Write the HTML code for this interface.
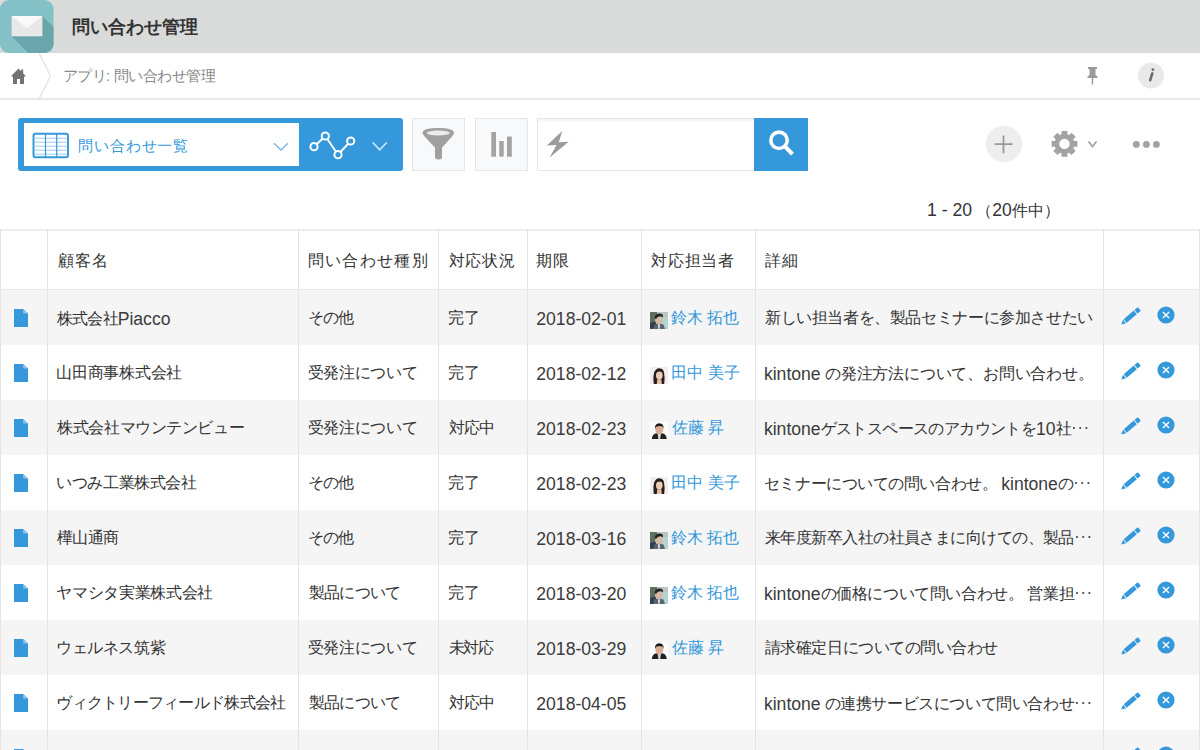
<!DOCTYPE html>
<html lang="ja">
<head>
<meta charset="utf-8">
<style>
*{box-sizing:border-box}
html,body{margin:0;padding:0}
body{width:1200px;height:750px;overflow:hidden;position:relative;background:#fff;font-family:"Liberation Sans",sans-serif;color:#333}
.abs{position:absolute}
svg{display:block}
svg.ell{display:inline-block;vertical-align:4px;margin-left:1px}
.l{font-size:17.6px;letter-spacing:0}
.td .l{position:relative;top:1px;color:#3b3b3b}
.nm .l{color:inherit}
#hdr{left:0;top:0;width:1200px;height:53px;background:#d9dada}
#title{left:72px;top:16px;font-size:18px;font-weight:bold;color:#333;line-height:22px;white-space:nowrap}
#bc{left:0;top:53px;width:1200px;height:47px;background:#fff;border-bottom:2px solid #e8eaea}
#bctext{left:62.5px;top:66.5px;font-size:15px;letter-spacing:-0.5px;color:#888;line-height:18px;white-space:nowrap}
#bctext .l{font-size:15px}
#viewbox{left:18px;top:118px;width:385px;height:53px;background:#3498db;border-radius:3px}
#viewsel{left:23.5px;top:123px;width:275.5px;height:43px;background:#fff}
#viewname{left:78px;top:136.5px;font-size:15px;letter-spacing:0.9px;color:#3498db;line-height:18px;white-space:nowrap}
.tbtn{top:118px;width:53px;height:53px;background:#f7f9fa;border:1px solid #e3e7e8}
#search{left:537px;top:118px;width:218px;height:53px;background:#fff;border:1px solid #e6e8e8;box-shadow:inset 0 2px 3px rgba(0,0,0,.05)}
#sbtn{left:754px;top:118px;width:54px;height:53px;background:#3498db}
#count{left:927px;top:200px;font-size:15.5px;color:#333;line-height:20px;white-space:nowrap}
.hl{left:0;width:1200px;height:1px;background:#e6e6e6}
.vl{width:1px;height:530px;background:#e4e4e4}
.th{font-size:16px;letter-spacing:1.2px;line-height:20px;white-space:nowrap;color:#333}
.td{font-size:16px;letter-spacing:-0.4px;line-height:20px;white-space:nowrap;color:#333}
.nm{color:#3498db}
</style>
</head>
<body>
<div id="hdr" class="abs"></div>
<svg class="abs" style="left:0;top:0" width="56" height="54" viewBox="0 0 56 54">
  <defs><clipPath id="ic"><rect x="0" y="0" width="53.5" height="53" rx="9"/></clipPath></defs>
  <rect x="0" y="0" width="53.5" height="53" rx="9" fill="#83c1c7"/>
  <path clip-path="url(#ic)" d="M11.6 36.3L42.4 16L82.4 56L51.6 76.3Z" fill="#6ba6ac"/>
  <rect x="11.6" y="16" width="30.8" height="20.3" fill="#e9e8e8"/>
  <path d="M11.6 16L27 28.3L42.4 16Z" fill="#f9f9f9"/>
</svg>
<div id="title" class="abs">問い合わせ管理</div>
<div id="bc" class="abs"></div>
<svg class="abs" style="left:0;top:53px" width="60" height="46" viewBox="0 53 60 46">
  <path d="M39 53L50.5 76L39 99" fill="none" stroke="#e2e2e2" stroke-width="1.2"/>
  <path d="M18.5 68.5L10.8 76.5H13V84H17V79H20V84H24V76.5H26.2L23.2 73.4V69.5H21.2V71.3Z" fill="#737373"/>
</svg>
<div id="bctext" class="abs">アプリ<span class="l">:</span> 問い合わせ管理</div>
<svg class="abs" style="left:1080px;top:60px" width="90" height="32" viewBox="1080 60 90 32">
  <path d="M1088 67H1097V69H1095.5V75L1097.5 76.5V78H1093.2V84.5H1091.8V78H1087.5V76.5L1089.5 75V69H1088Z" fill="#9a9a9a"/>
  <circle cx="1151" cy="75.5" r="13" fill="#e8eaea"/>
  <path d="M1152.3 73.4L1150.2 80.2" stroke="#6b6b6b" stroke-width="2.6" stroke-linecap="round"/>
  <circle cx="1152.9" cy="69.6" r="1.4" fill="#6b6b6b"/>
</svg>

<div id="viewbox" class="abs"></div>
<div id="viewsel" class="abs"></div>
<svg class="abs" style="left:0;top:110px" width="410" height="70" viewBox="0 110 410 70">
  <rect x="33.5" y="133.7" width="34.5" height="23.5" rx="2" fill="#fff" stroke="#3498db" stroke-width="2"/>
  <path d="M34 138.2H67.5M34 142.2H67.5M34 146.2H67.5M34 150.2H67.5M34 154.2H67.5" stroke="#9ccaee" stroke-width="1"/>
  <path d="M45.5 134V157M56.7 134V157" stroke="#3498db" stroke-width="1.2"/>
  <path d="M274 143.2L281 150L288 143.2" fill="none" stroke="#7db5e3" stroke-width="1.5"/>
  <path d="M314 146.7L325.3 136L338 154.7L350.7 141" fill="none" stroke="#fff" stroke-width="2"/>
  <circle cx="314" cy="146.7" r="3.6" fill="#3498db" stroke="#fff" stroke-width="2"/>
  <circle cx="325.3" cy="136" r="3.6" fill="#3498db" stroke="#fff" stroke-width="2"/>
  <circle cx="338" cy="154.7" r="3.6" fill="#3498db" stroke="#fff" stroke-width="2"/>
  <circle cx="350.7" cy="141" r="3.6" fill="#3498db" stroke="#fff" stroke-width="2"/>
  <path d="M372.7 142.5L379.7 149.8L386.7 142.5" fill="none" stroke="#d6e9f8" stroke-width="1.5"/>
</svg>
<div id="viewname" class="abs">問い合わせ一覧</div>
<div class="abs tbtn" style="left:412px"></div>
<div class="abs tbtn" style="left:475px"></div>
<div id="search" class="abs"></div>
<div id="sbtn" class="abs"></div>
<svg class="abs" style="left:410px;top:110px" width="400" height="70" viewBox="410 110 400 70">
  <path d="M422.5 133Q422.5 128 438.3 128Q454 128 454 133Q454 135 442 147.5V157Q442 159.5 438.5 159.5Q435 159.5 435 157V147.5Q422.5 135 422.5 133Z" fill="#a0a0a0"/>
  <ellipse cx="438.3" cy="133" rx="11.5" ry="2.6" fill="#ececec"/>
  <rect x="491.3" y="132" width="4.7" height="24.7" fill="#a3a3a3"/>
  <rect x="499.3" y="141" width="4.4" height="15.7" fill="#a3a3a3"/>
  <rect x="507" y="136.6" width="4.8" height="20.1" fill="#a3a3a3"/>
  <path d="M562.2 131L546.8 145.5L556.5 145L549.6 157.6L568.7 141.7L558.8 142.3Z" fill="#9c9c9c"/>
  <circle cx="779" cy="140.3" r="8.2" fill="none" stroke="#fff" stroke-width="3.6"/>
  <path d="M785.5 147L792.5 154.2" stroke="#fff" stroke-width="4"/>
</svg>
<svg class="abs" style="left:960px;top:110px" width="240" height="70" viewBox="960 110 240 70">
  <circle cx="1004" cy="144" r="18.3" fill="#eeeeee"/>
  <path d="M994.5 144.2H1012.5M1003.5 135.5V153.2" stroke="#999" stroke-width="1.8"/>
  <path id="gear" fill="#a3a3a3" fill-rule="evenodd" d="M1061.54 134.35L1061.62 131.02L1067.38 131.02L1067.46 134.35L1069.17 135.06L1071.57 132.75L1075.65 136.83L1073.34 139.23L1074.05 140.94L1077.38 141.02L1077.38 146.78L1074.05 146.86L1073.34 148.57L1075.65 150.97L1071.57 155.05L1069.17 152.74L1067.46 153.45L1067.38 156.78L1061.62 156.78L1061.54 153.45L1059.83 152.74L1057.43 155.05L1053.35 150.97L1055.66 148.57L1054.95 146.86L1051.62 146.78L1051.62 141.02L1054.95 140.94L1055.66 139.23L1053.35 136.83L1057.43 132.75L1059.83 135.06ZM1069.7 143.9A5.2 5.2 0 1 0 1059.3 143.9A5.2 5.2 0 1 0 1069.7 143.9Z"/>
  <path d="M1088.5 141.5L1092.5 146.5L1096.5 141.5" fill="none" stroke="#a3a3a3" stroke-width="1.8"/>
  <circle cx="1136.3" cy="144.4" r="3.4" fill="#a3a3a3"/>
  <circle cx="1146.4" cy="144.4" r="3.4" fill="#a3a3a3"/>
  <circle cx="1156.4" cy="144.4" r="3.4" fill="#a3a3a3"/>
</svg>
<div id="count" class="abs"><span class="l">1 - 20</span> （<span class="l">20</span>件中）</div>
<div class="abs" style="left:0;top:290px;width:1200px;height:55px;background:#f5f5f5"></div>
<div class="abs" style="left:0;top:345px;width:1200px;height:55px;background:#fff"></div>
<div class="abs" style="left:0;top:400px;width:1200px;height:55px;background:#f5f5f5"></div>
<div class="abs" style="left:0;top:455px;width:1200px;height:55px;background:#fff"></div>
<div class="abs" style="left:0;top:510px;width:1200px;height:55px;background:#f5f5f5"></div>
<div class="abs" style="left:0;top:565px;width:1200px;height:55px;background:#fff"></div>
<div class="abs" style="left:0;top:620px;width:1200px;height:55px;background:#f5f5f5"></div>
<div class="abs" style="left:0;top:675px;width:1200px;height:55px;background:#fff"></div>
<div class="abs" style="left:0;top:730px;width:1200px;height:55px;background:#f5f5f5"></div>
<div class="abs hl" style="top:229px;height:2px;background:#ececec"></div>
<div class="abs hl" style="top:289px"></div>
<div class="abs vl" style="left:0px;top:229px"></div>
<div class="abs vl" style="left:47px;top:229px"></div>
<div class="abs vl" style="left:298px;top:229px"></div>
<div class="abs vl" style="left:438px;top:229px"></div>
<div class="abs vl" style="left:527px;top:229px"></div>
<div class="abs vl" style="left:641px;top:229px"></div>
<div class="abs vl" style="left:755px;top:229px"></div>
<div class="abs vl" style="left:1103px;top:229px"></div>
<div class="abs vl" style="left:1199px;top:229px"></div>
<div id="h1" class="abs th" style="left:57.50px;top:251px;letter-spacing:1.200px">顧客名</div>
<div id="h2" class="abs th" style="left:307.50px;top:251px;letter-spacing:1.367px">問い合わせ種別</div>
<div id="h3" class="abs th" style="left:448.50px;top:251px;letter-spacing:0.867px">対応状況</div>
<div id="h4" class="abs th" style="left:536.10px;top:251px;letter-spacing:1.100px">期限</div>
<div id="h5" class="abs th" style="left:650.90px;top:251px;letter-spacing:0.825px">対応担当者</div>
<div id="h6" class="abs th" style="left:765.00px;top:251px;letter-spacing:0.500px">詳細</div>
<div class="abs" style="left:14px;top:309px;width:14px;height:18px"><svg class="doc" width="14" height="18" viewBox="0 0 14 18"><path d="M0 0H9.2L14 4.6V18H0Z" fill="#3498db"/><path d="M9.2 0V4.6H14Z" fill="#8cc4ef"/></svg></div>
<div id="c0_1" class="abs td" style="left:57.25px;top:308px;letter-spacing:-0.902px">株式会社<span class="l">Piacco</span></div>
<div id="c0_2" class="abs td" style="left:307.80px;top:308px;letter-spacing:-0.800px">その他</div>
<div id="c0_3" class="abs td" style="left:447.80px;top:308px;letter-spacing:0.000px">完了</div>
<div id="c0_4" class="abs td" style="left:536.30px;top:308px;letter-spacing:-0.280px"><span class="l">2018-02-01</span></div>
<div class="abs" style="left:650px;top:312px;width:18px;height:17px"><svg class="av" width="18" height="17" viewBox="0 0 18 17"><rect width="18" height="17" fill="#b9c6c2"/><rect width="7" height="17" fill="#5f6f5d"/><rect x="12" y="5" width="6" height="12" fill="#b5d3d2"/><path d="M0 11L6 9V17H0Z" fill="#34404e"/><ellipse cx="8.8" cy="8" rx="3.8" ry="4.5" fill="#d5bba6"/><path d="M4.6 6Q5 1.8 9.5 1.6Q13.5 1.6 13 5.5L11.5 4.5Q8 3.5 6 7Z" fill="#262427"/><path d="M3 17L4.5 12.5Q9 10.8 13.5 12.5L15 17Z" fill="#5a6572"/><path d="M8 12.3L10 12.3L9.6 17L8.4 17Z" fill="#e9e9e9"/></svg></div>
<div id="c0_5" class="abs td nm" style="left:671.00px;top:308px;letter-spacing:-0.200px">鈴木 拓也</div>
<div id="c0_6" class="abs td" style="left:764.90px;top:308px;letter-spacing:-0.385px">新しい担当者を、製品セミナーに参加させたい</div>
<div class="abs" style="left:1119px;top:306px;width:22px;height:20px"><svg class="pen" width="22" height="20" viewBox="0 0 22 20"><path d="M2.20 18.40L7.07 17.34L4.03 13.76ZM7.76 16.75L17.81 8.19L14.76 4.62L4.71 13.17ZM18.49 7.61L21.39 5.14L21.47 4.16L19.33 1.64L18.34 1.56L15.45 4.03Z" fill="#3498db"/></svg></div>
<div class="abs" style="left:1157px;top:306px;width:18px;height:18px"><svg class="xc" width="18" height="18" viewBox="0 0 18 18"><circle cx="9" cy="9" r="8.6" fill="#3498db"/><path d="M5.9 5.9L12.1 12.1M12.1 5.9L5.9 12.1" stroke="#fff" stroke-width="1.4"/></svg></div>
<div class="abs" style="left:14px;top:364px;width:14px;height:18px"><svg class="doc" width="14" height="18" viewBox="0 0 14 18"><path d="M0 0H9.2L14 4.6V18H0Z" fill="#3498db"/><path d="M9.2 0V4.6H14Z" fill="#8cc4ef"/></svg></div>
<div id="c1_1" class="abs td" style="left:56.25px;top:363px;letter-spacing:-0.291px">山田商事株式会社</div>
<div id="c1_2" class="abs td" style="left:307.80px;top:363px;letter-spacing:-0.335px">受発注について</div>
<div id="c1_3" class="abs td" style="left:447.80px;top:363px;letter-spacing:0.000px">完了</div>
<div id="c1_4" class="abs td" style="left:536.30px;top:363px;letter-spacing:-0.280px"><span class="l">2018-02-12</span></div>
<div class="abs" style="left:650px;top:367px;width:18px;height:17px"><svg class="av" width="18" height="17" viewBox="0 0 18 17"><rect width="18" height="17" fill="#efefef"/><path d="M3.8 17Q2.8 9 4.5 4.6Q6.5 1 9.5 1.2Q13.5 1.5 14 5.5Q15.2 11 14.2 17Z" fill="#2b1d1c"/><ellipse cx="9.3" cy="8.3" rx="3.3" ry="4.3" fill="#ebcdb5"/><path d="M6 6.5Q7.5 3.5 12.6 5.2L12.4 3.8Q9 2 6 5Z" fill="#2b1d1c"/><path d="M7.3 12.2H11.3L11.8 17H6.8Z" fill="#e2c0a6"/></svg></div>
<div id="c1_5" class="abs td nm" style="left:671.00px;top:363px;letter-spacing:0.050px">田中 美子</div>
<div id="c1_6" class="abs td" style="left:763.90px;top:363px;letter-spacing:-0.184px"><span class="l">kintone</span> の発注方法について、お問い合わせ。</div>
<div class="abs" style="left:1119px;top:361px;width:22px;height:20px"><svg class="pen" width="22" height="20" viewBox="0 0 22 20"><path d="M2.20 18.40L7.07 17.34L4.03 13.76ZM7.76 16.75L17.81 8.19L14.76 4.62L4.71 13.17ZM18.49 7.61L21.39 5.14L21.47 4.16L19.33 1.64L18.34 1.56L15.45 4.03Z" fill="#3498db"/></svg></div>
<div class="abs" style="left:1157px;top:361px;width:18px;height:18px"><svg class="xc" width="18" height="18" viewBox="0 0 18 18"><circle cx="9" cy="9" r="8.6" fill="#3498db"/><path d="M5.9 5.9L12.1 12.1M12.1 5.9L5.9 12.1" stroke="#fff" stroke-width="1.4"/></svg></div>
<div class="abs" style="left:14px;top:419px;width:14px;height:18px"><svg class="doc" width="14" height="18" viewBox="0 0 14 18"><path d="M0 0H9.2L14 4.6V18H0Z" fill="#3498db"/><path d="M9.2 0V4.6H14Z" fill="#8cc4ef"/></svg></div>
<div id="c2_1" class="abs td" style="left:57.25px;top:418px;letter-spacing:-0.421px">株式会社マウンテンビュー</div>
<div id="c2_2" class="abs td" style="left:307.80px;top:418px;letter-spacing:-0.335px">受発注について</div>
<div id="c2_3" class="abs td" style="left:448.80px;top:418px;letter-spacing:-0.700px">対応中</div>
<div id="c2_4" class="abs td" style="left:536.30px;top:418px;letter-spacing:-0.280px"><span class="l">2018-02-23</span></div>
<div class="abs" style="left:650px;top:422px;width:18px;height:17px"><svg class="av" width="18" height="17" viewBox="0 0 18 17"><rect width="18" height="17" fill="#fbfbfb"/><ellipse cx="9.3" cy="7.4" rx="4" ry="4.8" fill="#d9ad92"/><path d="M5 6.8Q4.6 1.4 9.3 1.3Q14 1.4 13.6 6.8L12.6 4.6Q9.3 3.2 6.2 4.8Z" fill="#1c1616"/><path d="M1.8 17Q2.2 12 6.6 11.3L9.3 13.2L12 11.3Q16.4 12 16.8 17Z" fill="#1d2320"/><path d="M7.6 11.6L9.3 13.2L11 11.6L10.2 17H8.4Z" fill="#ecd0d5"/></svg></div>
<div id="c2_5" class="abs td nm" style="left:672.00px;top:418px;letter-spacing:-0.067px">佐藤 昇</div>
<div id="c2_6" class="abs td" style="left:763.90px;top:418px;letter-spacing:-0.612px"><span class="l">kintone</span>ゲストスペースのアカウントを<span class="l">10</span>社<svg class="ell" width="16" height="4" viewBox="0 0 16 4"><circle cx="2" cy="2" r="1.1" fill="#444"/><circle cx="8.2" cy="2" r="1.1" fill="#444"/><circle cx="14.4" cy="2" r="1.1" fill="#444"/></svg></div>
<div class="abs" style="left:1119px;top:416px;width:22px;height:20px"><svg class="pen" width="22" height="20" viewBox="0 0 22 20"><path d="M2.20 18.40L7.07 17.34L4.03 13.76ZM7.76 16.75L17.81 8.19L14.76 4.62L4.71 13.17ZM18.49 7.61L21.39 5.14L21.47 4.16L19.33 1.64L18.34 1.56L15.45 4.03Z" fill="#3498db"/></svg></div>
<div class="abs" style="left:1157px;top:416px;width:18px;height:18px"><svg class="xc" width="18" height="18" viewBox="0 0 18 18"><circle cx="9" cy="9" r="8.6" fill="#3498db"/><path d="M5.9 5.9L12.1 12.1M12.1 5.9L5.9 12.1" stroke="#fff" stroke-width="1.4"/></svg></div>
<div class="abs" style="left:14px;top:474px;width:14px;height:18px"><svg class="doc" width="14" height="18" viewBox="0 0 14 18"><path d="M0 0H9.2L14 4.6V18H0Z" fill="#3498db"/><path d="M9.2 0V4.6H14Z" fill="#8cc4ef"/></svg></div>
<div id="c3_1" class="abs td" style="left:56.25px;top:473px;letter-spacing:-0.417px">いつみ工業株式会社</div>
<div id="c3_2" class="abs td" style="left:307.80px;top:473px;letter-spacing:-0.800px">その他</div>
<div id="c3_3" class="abs td" style="left:447.80px;top:473px;letter-spacing:0.000px">完了</div>
<div id="c3_4" class="abs td" style="left:536.30px;top:473px;letter-spacing:-0.280px"><span class="l">2018-02-23</span></div>
<div class="abs" style="left:650px;top:477px;width:18px;height:17px"><svg class="av" width="18" height="17" viewBox="0 0 18 17"><rect width="18" height="17" fill="#efefef"/><path d="M3.8 17Q2.8 9 4.5 4.6Q6.5 1 9.5 1.2Q13.5 1.5 14 5.5Q15.2 11 14.2 17Z" fill="#2b1d1c"/><ellipse cx="9.3" cy="8.3" rx="3.3" ry="4.3" fill="#ebcdb5"/><path d="M6 6.5Q7.5 3.5 12.6 5.2L12.4 3.8Q9 2 6 5Z" fill="#2b1d1c"/><path d="M7.3 12.2H11.3L11.8 17H6.8Z" fill="#e2c0a6"/></svg></div>
<div id="c3_5" class="abs td nm" style="left:671.00px;top:473px;letter-spacing:0.050px">田中 美子</div>
<div id="c3_6" class="abs td" style="left:763.90px;top:473px;letter-spacing:-0.448px">セミナーについての問い合わせ。 <span class="l">kintone</span>の<svg class="ell" width="16" height="4" viewBox="0 0 16 4"><circle cx="2" cy="2" r="1.1" fill="#444"/><circle cx="8.2" cy="2" r="1.1" fill="#444"/><circle cx="14.4" cy="2" r="1.1" fill="#444"/></svg></div>
<div class="abs" style="left:1119px;top:471px;width:22px;height:20px"><svg class="pen" width="22" height="20" viewBox="0 0 22 20"><path d="M2.20 18.40L7.07 17.34L4.03 13.76ZM7.76 16.75L17.81 8.19L14.76 4.62L4.71 13.17ZM18.49 7.61L21.39 5.14L21.47 4.16L19.33 1.64L18.34 1.56L15.45 4.03Z" fill="#3498db"/></svg></div>
<div class="abs" style="left:1157px;top:471px;width:18px;height:18px"><svg class="xc" width="18" height="18" viewBox="0 0 18 18"><circle cx="9" cy="9" r="8.6" fill="#3498db"/><path d="M5.9 5.9L12.1 12.1M12.1 5.9L5.9 12.1" stroke="#fff" stroke-width="1.4"/></svg></div>
<div class="abs" style="left:14px;top:529px;width:14px;height:18px"><svg class="doc" width="14" height="18" viewBox="0 0 14 18"><path d="M0 0H9.2L14 4.6V18H0Z" fill="#3498db"/><path d="M9.2 0V4.6H14Z" fill="#8cc4ef"/></svg></div>
<div id="c4_1" class="abs td" style="left:57.25px;top:528px;letter-spacing:-0.850px">樺山通商</div>
<div id="c4_2" class="abs td" style="left:307.80px;top:528px;letter-spacing:-0.800px">その他</div>
<div id="c4_3" class="abs td" style="left:447.80px;top:528px;letter-spacing:0.000px">完了</div>
<div id="c4_4" class="abs td" style="left:536.30px;top:528px;letter-spacing:-0.280px"><span class="l">2018-03-16</span></div>
<div class="abs" style="left:650px;top:532px;width:18px;height:17px"><svg class="av" width="18" height="17" viewBox="0 0 18 17"><rect width="18" height="17" fill="#b9c6c2"/><rect width="7" height="17" fill="#5f6f5d"/><rect x="12" y="5" width="6" height="12" fill="#b5d3d2"/><path d="M0 11L6 9V17H0Z" fill="#34404e"/><ellipse cx="8.8" cy="8" rx="3.8" ry="4.5" fill="#d5bba6"/><path d="M4.6 6Q5 1.8 9.5 1.6Q13.5 1.6 13 5.5L11.5 4.5Q8 3.5 6 7Z" fill="#262427"/><path d="M3 17L4.5 12.5Q9 10.8 13.5 12.5L15 17Z" fill="#5a6572"/><path d="M8 12.3L10 12.3L9.6 17L8.4 17Z" fill="#e9e9e9"/></svg></div>
<div id="c4_5" class="abs td nm" style="left:671.00px;top:528px;letter-spacing:-0.200px">鈴木 拓也</div>
<div id="c4_6" class="abs td" style="left:764.90px;top:528px;letter-spacing:-0.548px">来年度新卒入社の社員さまに向けての、製品<svg class="ell" width="16" height="4" viewBox="0 0 16 4"><circle cx="2" cy="2" r="1.1" fill="#444"/><circle cx="8.2" cy="2" r="1.1" fill="#444"/><circle cx="14.4" cy="2" r="1.1" fill="#444"/></svg></div>
<div class="abs" style="left:1119px;top:526px;width:22px;height:20px"><svg class="pen" width="22" height="20" viewBox="0 0 22 20"><path d="M2.20 18.40L7.07 17.34L4.03 13.76ZM7.76 16.75L17.81 8.19L14.76 4.62L4.71 13.17ZM18.49 7.61L21.39 5.14L21.47 4.16L19.33 1.64L18.34 1.56L15.45 4.03Z" fill="#3498db"/></svg></div>
<div class="abs" style="left:1157px;top:526px;width:18px;height:18px"><svg class="xc" width="18" height="18" viewBox="0 0 18 18"><circle cx="9" cy="9" r="8.6" fill="#3498db"/><path d="M5.9 5.9L12.1 12.1M12.1 5.9L5.9 12.1" stroke="#fff" stroke-width="1.4"/></svg></div>
<div class="abs" style="left:14px;top:584px;width:14px;height:18px"><svg class="doc" width="14" height="18" viewBox="0 0 14 18"><path d="M0 0H9.2L14 4.6V18H0Z" fill="#3498db"/><path d="M9.2 0V4.6H14Z" fill="#8cc4ef"/></svg></div>
<div id="c5_1" class="abs td" style="left:56.25px;top:583px;letter-spacing:-0.306px">ヤマシタ実業株式会社</div>
<div id="c5_2" class="abs td" style="left:308.80px;top:583px;letter-spacing:-0.720px">製品について</div>
<div id="c5_3" class="abs td" style="left:447.80px;top:583px;letter-spacing:0.000px">完了</div>
<div id="c5_4" class="abs td" style="left:536.30px;top:583px;letter-spacing:-0.613px"><span class="l">2018-03-20</span></div>
<div class="abs" style="left:650px;top:587px;width:18px;height:17px"><svg class="av" width="18" height="17" viewBox="0 0 18 17"><rect width="18" height="17" fill="#b9c6c2"/><rect width="7" height="17" fill="#5f6f5d"/><rect x="12" y="5" width="6" height="12" fill="#b5d3d2"/><path d="M0 11L6 9V17H0Z" fill="#34404e"/><ellipse cx="8.8" cy="8" rx="3.8" ry="4.5" fill="#d5bba6"/><path d="M4.6 6Q5 1.8 9.5 1.6Q13.5 1.6 13 5.5L11.5 4.5Q8 3.5 6 7Z" fill="#262427"/><path d="M3 17L4.5 12.5Q9 10.8 13.5 12.5L15 17Z" fill="#5a6572"/><path d="M8 12.3L10 12.3L9.6 17L8.4 17Z" fill="#e9e9e9"/></svg></div>
<div id="c5_5" class="abs td nm" style="left:671.00px;top:583px;letter-spacing:-0.200px">鈴木 拓也</div>
<div id="c5_6" class="abs td" style="left:763.90px;top:583px;letter-spacing:-0.402px"><span class="l">kintone</span>の価格について問い合わせ。 営業担<svg class="ell" width="16" height="4" viewBox="0 0 16 4"><circle cx="2" cy="2" r="1.1" fill="#444"/><circle cx="8.2" cy="2" r="1.1" fill="#444"/><circle cx="14.4" cy="2" r="1.1" fill="#444"/></svg></div>
<div class="abs" style="left:1119px;top:581px;width:22px;height:20px"><svg class="pen" width="22" height="20" viewBox="0 0 22 20"><path d="M2.20 18.40L7.07 17.34L4.03 13.76ZM7.76 16.75L17.81 8.19L14.76 4.62L4.71 13.17ZM18.49 7.61L21.39 5.14L21.47 4.16L19.33 1.64L18.34 1.56L15.45 4.03Z" fill="#3498db"/></svg></div>
<div class="abs" style="left:1157px;top:581px;width:18px;height:18px"><svg class="xc" width="18" height="18" viewBox="0 0 18 18"><circle cx="9" cy="9" r="8.6" fill="#3498db"/><path d="M5.9 5.9L12.1 12.1M12.1 5.9L5.9 12.1" stroke="#fff" stroke-width="1.4"/></svg></div>
<div class="abs" style="left:14px;top:639px;width:14px;height:18px"><svg class="doc" width="14" height="18" viewBox="0 0 14 18"><path d="M0 0H9.2L14 4.6V18H0Z" fill="#3498db"/><path d="M9.2 0V4.6H14Z" fill="#8cc4ef"/></svg></div>
<div id="c6_1" class="abs td" style="left:56.25px;top:638px;letter-spacing:-0.440px">ウェルネス筑紫</div>
<div id="c6_2" class="abs td" style="left:307.80px;top:638px;letter-spacing:-0.335px">受発注について</div>
<div id="c6_3" class="abs td" style="left:448.80px;top:638px;letter-spacing:-1.300px">未対応</div>
<div id="c6_4" class="abs td" style="left:536.30px;top:638px;letter-spacing:-0.280px"><span class="l">2018-03-29</span></div>
<div class="abs" style="left:650px;top:642px;width:18px;height:17px"><svg class="av" width="18" height="17" viewBox="0 0 18 17"><rect width="18" height="17" fill="#fbfbfb"/><ellipse cx="9.3" cy="7.4" rx="4" ry="4.8" fill="#d9ad92"/><path d="M5 6.8Q4.6 1.4 9.3 1.3Q14 1.4 13.6 6.8L12.6 4.6Q9.3 3.2 6.2 4.8Z" fill="#1c1616"/><path d="M1.8 17Q2.2 12 6.6 11.3L9.3 13.2L12 11.3Q16.4 12 16.8 17Z" fill="#1d2320"/><path d="M7.6 11.6L9.3 13.2L11 11.6L10.2 17H8.4Z" fill="#ecd0d5"/></svg></div>
<div id="c6_5" class="abs td nm" style="left:672.00px;top:638px;letter-spacing:-0.067px">佐藤 昇</div>
<div id="c6_6" class="abs td" style="left:764.90px;top:638px;letter-spacing:-0.466px">請求確定日についての問い合わせ</div>
<div class="abs" style="left:1119px;top:636px;width:22px;height:20px"><svg class="pen" width="22" height="20" viewBox="0 0 22 20"><path d="M2.20 18.40L7.07 17.34L4.03 13.76ZM7.76 16.75L17.81 8.19L14.76 4.62L4.71 13.17ZM18.49 7.61L21.39 5.14L21.47 4.16L19.33 1.64L18.34 1.56L15.45 4.03Z" fill="#3498db"/></svg></div>
<div class="abs" style="left:1157px;top:636px;width:18px;height:18px"><svg class="xc" width="18" height="18" viewBox="0 0 18 18"><circle cx="9" cy="9" r="8.6" fill="#3498db"/><path d="M5.9 5.9L12.1 12.1M12.1 5.9L5.9 12.1" stroke="#fff" stroke-width="1.4"/></svg></div>
<div class="abs" style="left:14px;top:694px;width:14px;height:18px"><svg class="doc" width="14" height="18" viewBox="0 0 14 18"><path d="M0 0H9.2L14 4.6V18H0Z" fill="#3498db"/><path d="M9.2 0V4.6H14Z" fill="#8cc4ef"/></svg></div>
<div id="c7_1" class="abs td" style="left:56.25px;top:693px;letter-spacing:-0.721px">ヴィクトリーフィールド株式会社</div>
<div id="c7_2" class="abs td" style="left:308.80px;top:693px;letter-spacing:-0.720px">製品について</div>
<div id="c7_3" class="abs td" style="left:448.80px;top:693px;letter-spacing:-0.700px">対応中</div>
<div id="c7_4" class="abs td" style="left:536.30px;top:693px;letter-spacing:-0.280px"><span class="l">2018-04-05</span></div>
<div id="c7_6" class="abs td" style="left:763.90px;top:693px;letter-spacing:-0.402px"><span class="l">kintone</span> の連携サービスについて問い合わせ<svg class="ell" width="16" height="4" viewBox="0 0 16 4"><circle cx="2" cy="2" r="1.1" fill="#444"/><circle cx="8.2" cy="2" r="1.1" fill="#444"/><circle cx="14.4" cy="2" r="1.1" fill="#444"/></svg></div>
<div class="abs" style="left:1119px;top:691px;width:22px;height:20px"><svg class="pen" width="22" height="20" viewBox="0 0 22 20"><path d="M2.20 18.40L7.07 17.34L4.03 13.76ZM7.76 16.75L17.81 8.19L14.76 4.62L4.71 13.17ZM18.49 7.61L21.39 5.14L21.47 4.16L19.33 1.64L18.34 1.56L15.45 4.03Z" fill="#3498db"/></svg></div>
<div class="abs" style="left:1157px;top:691px;width:18px;height:18px"><svg class="xc" width="18" height="18" viewBox="0 0 18 18"><circle cx="9" cy="9" r="8.6" fill="#3498db"/><path d="M5.9 5.9L12.1 12.1M12.1 5.9L5.9 12.1" stroke="#fff" stroke-width="1.4"/></svg></div>
<div class="abs" style="left:14px;top:749px;width:14px;height:18px"><svg class="doc" width="14" height="18" viewBox="0 0 14 18"><path d="M0 0H9.2L14 4.6V18H0Z" fill="#3498db"/><path d="M9.2 0V4.6H14Z" fill="#8cc4ef"/></svg></div>
<div id="c8_1" class="abs td" style="left:57.00px;top:748px"></div>
<div id="c8_2" class="abs td" style="left:308.00px;top:748px"></div>
<div id="c8_3" class="abs td" style="left:448.00px;top:748px"></div>
<div id="c8_4" class="abs td" style="left:537.00px;top:748px"></div>
<div id="c8_6" class="abs td" style="left:765.00px;top:748px"></div>
<div class="abs" style="left:1119px;top:746px;width:22px;height:20px"><svg class="pen" width="22" height="20" viewBox="0 0 22 20"><path d="M2.20 18.40L7.07 17.34L4.03 13.76ZM7.76 16.75L17.81 8.19L14.76 4.62L4.71 13.17ZM18.49 7.61L21.39 5.14L21.47 4.16L19.33 1.64L18.34 1.56L15.45 4.03Z" fill="#3498db"/></svg></div>
<div class="abs" style="left:1157px;top:746px;width:18px;height:18px"><svg class="xc" width="18" height="18" viewBox="0 0 18 18"><circle cx="9" cy="9" r="8.6" fill="#3498db"/><path d="M5.9 5.9L12.1 12.1M12.1 5.9L5.9 12.1" stroke="#fff" stroke-width="1.4"/></svg></div>
</body>
</html>
